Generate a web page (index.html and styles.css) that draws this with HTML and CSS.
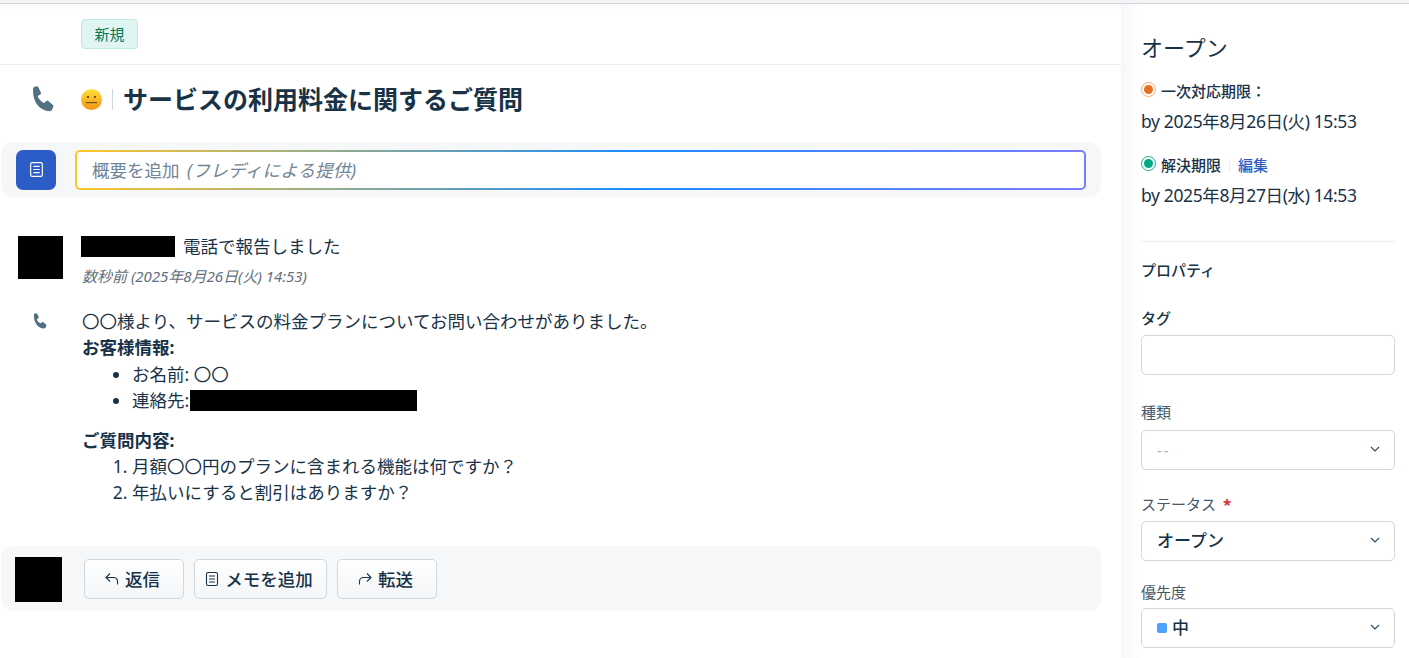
FILE: index.html
```html
<!DOCTYPE html>
<html lang="ja">
<head>
<meta charset="utf-8">
<title>サービスの利用料金に関するご質問</title>
<link rel="stylesheet" href="styles.css">
</head>
<body>
<div class="page">
  <div class="topbar"></div>
  <div class="content">
  <main class="main">
    <div class="badge-row"><span class="badge">新規</span></div>
    <div class="title-row">
      <svg class="title-phone" viewBox="0 0 66 78"><path d="M3 8Q3 3 8 2L15 1Q18 1 19 4L27 20Q28 23 25 25L18 30Q17 32 18 34Q24 44 33 50Q35 51 37 50L43 45Q45 43 48 44L62 56Q65 58 64 62L61 70Q59 75 54 76Q30 76 14 54Q2 36 3 8Z"/></svg>
      <svg class="emoji" viewBox="0 0 21 21">
        <defs><linearGradient id="face" x1="0" y1="0" x2="0" y2="1"><stop offset="0" stop-color="#fde03a"/><stop offset="1" stop-color="#f29312"/></linearGradient></defs>
        <circle cx="10.500" cy="10.500" r="10.500" fill="url(#face)"/>
        <circle cx="7" cy="8" r="1.100" fill="#4a3a1a"/><circle cx="14" cy="8" r="1.100" fill="#4a3a1a"/>
        <rect x="5" y="13" width="11" height="1.200" fill="#6b5316"/>
      </svg>
      <span class="title-sep"></span>
      <h1 class="title">サービスの利用料金に関するご質問</h1>
    </div>
    <div class="summary-bar">
      <span class="summary-icon">
        <svg class="note-white" viewBox="0 0 16 16"><rect x="2.500" y="1.500" width="11" height="13" rx="1.500"/><path d="M5 5h6M5 8h6M5 11h6"/></svg>
      </span>
      <div class="summary-input"><span class="summary-inner">概要を追加 <em>(フレディによる提供)</em></span></div>
    </div>
    <section class="activity">
      <div class="avatar"></div>
      <div class="activity-head">
        <div class="activity-line"><span class="redact-name"></span><span>電話で報告しました</span></div>
        <div class="activity-time">数秒前 (2025年8月26日(火) 14:53)</div>
      </div>
    </section>
    <section class="message">
      <svg class="msg-phone" viewBox="0 0 66 78"><path d="M3 8Q3 3 8 2L15 1Q18 1 19 4L27 20Q28 23 25 25L18 30Q17 32 18 34Q24 44 33 50Q35 51 37 50L43 45Q45 43 48 44L62 56Q65 58 64 62L61 70Q59 75 54 76Q30 76 14 54Q2 36 3 8Z"/></svg>
      <div class="msg-body">
        <p>〇〇様より、サービスの料金プランについてお問い合わせがありました。</p>
        <p><strong>お客様情報:</strong></p>
        <ul>
          <li>お名前: 〇〇</li>
          <li>連絡先:<span class="redact-contact"></span></li>
        </ul>
        <p><strong>ご質問内容:</strong></p>
        <ol>
          <li>月額〇〇円のプランに含まれる機能は何ですか？</li>
          <li>年払いにすると割引はありますか？</li>
        </ol>
      </div>
    </section>
    <div class="reply-bar">
      <div class="reply-avatar"></div>
      <div class="reply-actions">
        <button class="btn btn-reply"><svg class="btn-icon" viewBox="0 0 16 16"><path d="M6 2.500 2 6.500l4 4M2 6.500h7.500c2.500 0 4 1.500 4 4V13.500"/></svg>返信</button>
        <button class="btn btn-note"><svg class="btn-icon" viewBox="0 0 16 16"><rect x="2.500" y="1.500" width="11" height="13" rx="1.500"/><path d="M5 5h6M5 8h6M5 11h6"/></svg>メモを追加</button>
        <button class="btn btn-fwd"><svg class="btn-icon" viewBox="0 0 16 16"><path d="M10 2.500l4 4-4 4M14 6.500H6.500c-2.500 0-4 1.500-4 4V13.500"/></svg>転送</button>
      </div>
    </div>
  </main>
  <aside class="side">
    <h2 class="side-status">オープン</h2>
    <div class="sla sla-first"><span class="dot dot-orange"></span><span class="sla-label">一次対応期限：</span></div>
    <div class="sla-date">by 2025年8月26日(火) 15:53</div>
    <div class="sla sla-second"><span class="dot dot-green"></span><span class="sla-label">解決期限</span><span class="sla-sep"></span><span class="sla-edit">編集</span></div>
    <div class="sla-date">by 2025年8月27日(水) 14:53</div>
    <hr class="side-rule">
    <div class="side-heading">プロパティ</div>
    <div class="field field-tag"><label class="field-label">タグ</label><div class="control"></div></div>
    <div class="field field-type"><label class="field-label">種類</label><div class="control"><span class="placeholder">--</span><svg class="chev" viewBox="0 0 10 6"><path d="M1 1l4 4 4-4"/></svg></div></div>
    <div class="field field-status"><label class="field-label">ステータス <span class="req">*</span></label><div class="control"><span class="value">オープン</span><svg class="chev" viewBox="0 0 10 6"><path d="M1 1l4 4 4-4"/></svg></div></div>
    <div class="field field-prio"><label class="field-label">優先度</label><div class="control"><span class="prio-dot"></span><span class="value">中</span><svg class="chev" viewBox="0 0 10 6"><path d="M1 1l4 4 4-4"/></svg></div></div>
  </aside>
  </div>
</div>
</body>
</html>
```
FILE: styles.css
```css
* { box-sizing: border-box; }
html, body { margin: 0; height: 100%; overflow: hidden; background: #fff; }
body {
  font-family: "Noto Sans", "Noto Sans CJK JP", sans-serif;
  font-size: 17.5px;
  line-height: 26.25px;
  color: #12344d;
}
.page {
  display: flex; flex-direction: column;
  height: 658px;
  width: 1409px;
  overflow: hidden;
}
.topbar { height: 4px; flex: none; background: #f2f3f5; border-bottom: 1px solid #d6d8dd; }
.content { display: flex; flex: 1; min-height: 0; }
.main { width: 1121px; flex: none; background: linear-gradient(#f8f9fa, #fff) no-repeat top / 100% 6px; }

.badge-row { height: 61px; padding: 15px 0 0 81px; border-bottom: 1px solid #ebeff3; }
.badge {
  display: inline-flex; align-items: center; justify-content: center;
  width: 57px; height: 30px;
  background: #e0f5f1; border: 1px solid #bce8df; border-radius: 4px;
  color: #00795b; font-size: 15px; line-height: 1;
}
.title-row { display: flex; align-items: center; height: 77px; padding: 0 0 9px 32px; }
.title-phone { width: 22px; height: 26px; fill: #527084; margin-right: 27px; flex: none; }
.emoji { width: 21px; height: 21px; flex: none; }
.title-sep { width: 1px; height: 21px; background: #cfd7df; margin: 0 10px; }
.title { margin: 0; font-size: 25px; line-height: 32px; font-weight: 700; color: #183247; }

.summary-bar {
  display: flex; align-items: center; gap: 19px;
  margin-left: 1px; width: 1100px; height: 55px;
  padding: 0 15px;
  background: #f5f7f9; border-radius: 12px;
}
.summary-icon {
  width: 40px; height: 40px; flex: none;
  background: #2c5cc5; border-radius: 7px;
  display: flex; align-items: center; justify-content: center;
}
.note-white { width: 17px; height: 17px; fill: none; stroke: #fff; stroke-width: 1.100; }
.summary-input {
  flex: none; width: 1011px; height: 40px; padding: 2px;
  border-radius: 5px;
  background: linear-gradient(90deg, #ffc629 0%, #1a8cff 55%, #7b7bff 100%);
}
.summary-inner {
  display: block; height: 36px; padding: 0 15px;
  background: #fff; border-radius: 3px;
  color: #6f8496; line-height: 36px; font-size: 17.5px;
}
.summary-inner em { font-style: italic; margin-left: 3px; letter-spacing: .3px; }

.activity { display: flex; padding: 39px 0 0 18px; }
.avatar { width: 45px; height: 43px; background: #000; flex: none; margin-right: 18px; }
.activity-line { display: flex; align-items: center; gap: 8px; height: 21px; color: #183247; }
.redact-name { display: block; width: 94px; height: 21px; background: #000; }
.activity-time { margin: 9px 0 0 1px; font-size: 15px; line-height: 20px; font-style: italic; color: #5f6f7d; }

.message { display: flex; padding: 22px 0 0 33px; }
.msg-phone { width: 14px; height: 16px; margin: 5px 35px 0 0; fill: #527084; flex: none; }
.msg-body { color: #183247; }
.msg-body p { margin: 0; }
.msg-body strong { font-weight: 700; }
.msg-body ul, .msg-body ol { margin: 0; padding: 0 0 0 50px; }
.msg-body ul { margin-bottom: 13.6px; }
.redact-contact { display: inline-block; width: 227px; height: 21px; margin-left: 1px; background: #000; vertical-align: -4px; }

.reply-bar {
  display: flex; align-items: center;
  margin: 40.4px 0 0 1px; width: 1100px; height: 65px;
  padding: 2px 14px 0;
  background: #f5f7f9; border-radius: 12px;
}
.reply-avatar { width: 47px; height: 45px; background: #000; flex: none; margin-right: 22px; }
.reply-actions { display: flex; gap: 10px; }
.btn {
  display: flex; align-items: center; justify-content: center; gap: 5px;
  height: 40px; padding: 0 4px 0 0;
  background: linear-gradient(#fff, #f3f5f7);
  border: 1px solid #cfd7df; border-radius: 5px;
  font: inherit; font-weight: 500; color: #183247; font-size: 17.5px;
}
.btn-reply, .btn-fwd { width: 100px; }
.btn-note { width: 133px; }
.btn-icon { width: 16px; height: 16px; fill: none; stroke: #183247; stroke-width: 1.100; flex: none; }

.side {
  flex: 1; padding: 28px 14px 0 20px; min-width: 0;
  background: linear-gradient(90deg, #f5f7f9, #fff 20px);
}
.side-status { margin: 0; font-size: 22px; line-height: 30px; font-weight: 400; color: #183247; }
.sla { display: flex; align-items: center; font-size: 15px; line-height: 20px; color: #183247; }
.sla-first { margin-top: 19px; }
.sla-second { margin-top: 21px; }
.sla-label { font-weight: 500; margin-left: 5px; }
.dot { width: 15px; height: 15px; border-radius: 50%; flex: none; margin-top: -3px; padding: 2px; background-clip: content-box; border: 1px solid; }
.dot-orange { background-color: #e86f25; border-color: #f9a963; }
.dot-green { background-color: #00a886; border-color: #12b08e; }
.sla-sep { width: 1px; height: 14px; background: #ebeff3; margin: 0 8px; }
.sla-edit { color: #2c5cc5; font-weight: 500; }
.sla-date { margin-top: 7px; font-size: 17.5px; line-height: 26px; color: #183247; letter-spacing: -.37px; }
.side-rule { margin: 33px 0 0; border: 0; border-top: 1px solid #ebeff3; }
.side-heading { margin-top: 18px; font-size: 15px; line-height: 20px; font-weight: 500; color: #183247; }
.field-label { display: block; font-size: 15px; line-height: 20px; color: #475867; margin-bottom: 7px; }
.field-tag { margin-top: 28px; }
.field-tag .field-label { font-weight: 500; color: #183247; }
.field-type { margin-top: 27px; }
.field-type .field-label { margin-bottom: 8px; }
.field-status { margin-top: 24px; }
.field-prio { margin-top: 21px; }
.field-prio .field-label { margin-bottom: 6px; }
.control {
  display: flex; align-items: center; position: relative;
  height: 40px; padding: 0 15px;
  background: #fff; border: 1px solid #cfd7df; border-radius: 5px;
}
.placeholder { color: #a3b0bc; font-size: 15px; letter-spacing: 2px; }
.value { font-weight: 500; color: #183247; font-size: 17px; }
.req { color: #d72d30; font-weight: 700; margin-left: 3px; }
.prio-dot { width: 10px; height: 10px; border-radius: 2px; background: #4da1ff; margin-right: 5px; }
.chev { position: absolute; right: 14px; top: 15px; width: 10px; height: 6px; fill: none; stroke: #264966; stroke-width: 1.100; }
```
